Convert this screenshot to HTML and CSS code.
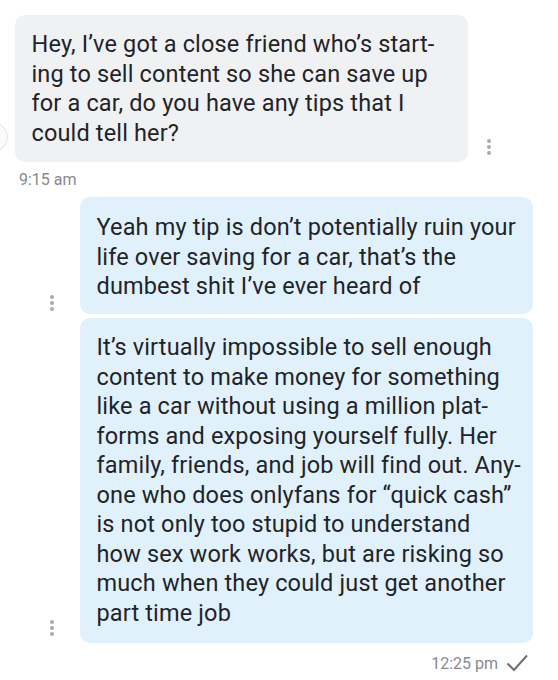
FILE: index.html
```html
<!DOCTYPE html>
<html>
<head>
<meta charset="utf-8">
<link rel="stylesheet" href="styles.css">
</head>
<body>
<div class="chat">
  <div class="avatar"></div>
  <div class="row in">
    <div class="bubble gray b1">Hey, I’ve got a close friend who’s start-<br>ing to sell content so she can save up<br>for a car, do you have any tips that I<br>could tell her?</div>
    <div class="dots"><span></span><span></span><span></span></div>
  </div>
  <div class="time t1">9:15 am</div>
  <div class="row out">
    <div class="dots"><span></span><span></span><span></span></div>
    <div class="bubble blue b2">Yeah my tip is don’t potentially ruin your<br>life over saving for a car, that’s the<br>dumbest shit I’ve ever heard of</div>
  </div>
  <div class="row out">
    <div class="dots"><span></span><span></span><span></span></div>
    <div class="bubble blue b3">It’s virtually impossible to sell enough<br>content to make money for something<br>like a car without using a million plat-<br>forms and exposing yourself fully. Her<br>family, friends, and job will find out. Any-<br>one who does onlyfans for “quick cash”<br>is not only too stupid to understand<br>how sex work works, but are risking so<br>much when they could just get another<br>part time job</div>
  </div>
  <div class="time t2"><span>12:25 pm</span>
    <svg class="check" width="22" height="18" viewBox="0 0 22 18"><path d="M1.5 9.5 L8 16 L21 1.5" fill="none" stroke="#6c7075" stroke-width="2"/></svg>
  </div>
</div>
</body>
</html>
```
FILE: styles.css
```css
html, body { margin: 0; padding: 0; background: #fff; }
body { width: 558px; height: 680px; overflow: hidden; font-family: Roboto, "Liberation Sans", sans-serif; }
.chat { position: relative; padding-top: 15px; }
.avatar { position: absolute; left: -28px; top: 121px; width: 34px; height: 30px; border-radius: 50%; border: 1px solid #e4e5e7; background: #fbfbfb; }
.row { display: flex; align-items: flex-end; }
.row.in { padding-left: 15px; }
.row.out { justify-content: flex-end; padding-right: 25px; }
.bubble { color: #1f2428; border-radius: 10px; box-sizing: border-box; white-space: nowrap; font-size: 23.5px; letter-spacing: 0.15px; line-height: 29.5px; width: 453px; padding-left: 16.5px; }
.gray { background: #f0f1f3; height: 147px; padding-top: 15px; }
.blue { background: #e1f1fc; }
.b2 { height: 117px; padding-top: 16px; margin-bottom: 4px; }
.b3 { height: 325px; padding-top: 15px; }
.dots { display: flex; flex-direction: column; gap: 1.8px; align-items: center; padding-bottom: 7px; }
.dots span { width: 4px; height: 4px; border-radius: 50%; background: #a9abae; }
.row.in .dots { margin-left: 18.5px; }
.row.out .dots { margin-right: 26.5px; }
.time { font-size: 16px; color: #878a8e; }
.t1 { padding: 9px 0 0 19px; height: 26px; line-height: 18.75px; }
.t2 { display: flex; justify-content: flex-end; align-items: center; gap: 8px; height: 19px; line-height: 19px; margin-top: 10.5px; padding-right: 30px; }
.check { display: block; }
```
